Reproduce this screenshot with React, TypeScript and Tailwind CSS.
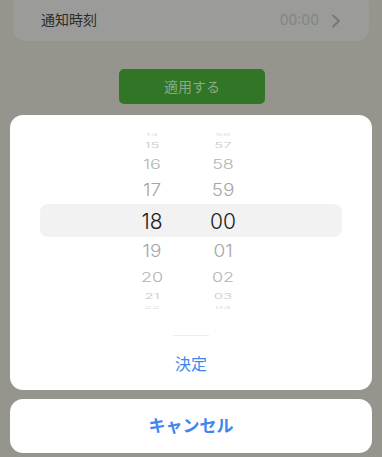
import React from "react"

const font = { fontFamily: '"Inter", "Noto Sans CJK JP", sans-serif' }

type Row = { h: string; m: string; height: string; size: string; color: string; scale: string }

const above: Row[] = [
  { h: "14", m: "56", height: "h-[8px]", size: "text-[13px]", color: "text-[#d4d8dc]", scale: "scale-y-[0.25]" },
  { h: "15", m: "57", height: "h-[14px]", size: "text-[15px]", color: "text-[#c4c8cc]", scale: "scale-y-50" },
  { h: "16", m: "58", height: "h-[24px]", size: "text-[18px]", color: "text-[#b2b2b2]", scale: "scale-y-75" },
  { h: "17", m: "59", height: "h-[28px]", size: "text-[19px]", color: "text-[#a6a6a6]", scale: "scale-y-90" },
]

const below: Row[] = [
  { h: "19", m: "01", height: "h-[28px]", size: "text-[19px]", color: "text-[#a6a6a6]", scale: "scale-y-90" },
  { h: "20", m: "02", height: "h-[24px]", size: "text-[18px]", color: "text-[#b2b2b2]", scale: "scale-y-75" },
  { h: "21", m: "03", height: "h-[14px]", size: "text-[15px]", color: "text-[#c4c8cc]", scale: "scale-y-50" },
  { h: "22", m: "04", height: "h-[8px]", size: "text-[13px]", color: "text-[#d4d8dc]", scale: "scale-y-[0.25]" },
]

function WheelRow({ row }: { row: Row }) {
  return (
    <div className={`flex items-center overflow-hidden pl-[112px] ${row.height}`}>
      <div className={`w-[60px] text-center font-light leading-none ${row.size} ${row.color} ${row.scale}`}>{row.h}</div>
      <div className={`ml-[11px] w-[60px] text-center font-light leading-none ${row.size} ${row.color} ${row.scale}`}>{row.m}</div>
    </div>
  )
}

export default function App() {
  return (
    <div className="h-[457px] w-[382px] overflow-hidden bg-[#95958e]" style={font}>
      {/* dimmed settings page */}
      <div className="mx-[13px] -mt-[10px] flex h-[51px] items-end rounded-xl bg-[#9b9b99] pb-[11px] pl-[28px] pr-[28px]">
        <span className="text-[14px] text-[#2b2b2b]">通知時刻</span>
        <span className="ml-auto text-[14px] text-[#7f887e]">00:00</span>
        <svg className="ml-[12px] mb-[2px]" width="10" height="14" viewBox="0 0 10 14" fill="none">
          <path d="M2 1.5 L8 7 L2 12.5" stroke="#6f7d6d" strokeWidth="2" strokeLinecap="round" strokeLinejoin="round" />
        </svg>
      </div>

      <div className="mt-[28px] flex justify-center">
        <div className="ml-[2px] flex h-[35px] w-[146px] items-center justify-center rounded-[5px] bg-[#317627] text-[14px] text-[#8ea98a]">
          適用する
        </div>
      </div>

      {/* action sheet */}
      <div className="mx-[10px] mt-[11px] h-[275px] rounded-[13px] bg-white">
        <div className="pt-[15px]">
          {above.map((r) => (
            <WheelRow key={r.h} row={r} />
          ))}
          <div className="mx-[30px] flex h-[33px] items-center rounded-[8px] bg-[#f2f2f2] pl-[82px] pt-[2px]">
            <div className="w-[60px] text-center text-[21px] font-light leading-none text-[#1c1c1c]">18</div>
            <div className="ml-[11px] w-[60px] text-center text-[21px] font-light leading-none text-[#1c1c1c]">00</div>
          </div>
          {below.map((r) => (
            <WheelRow key={r.h} row={r} />
          ))}
        </div>
        <div className="mx-auto mt-[24px] h-px w-[36px] bg-[#ececec]" />
        <div className="flex h-[55px] items-center justify-center text-[16px] text-[#3f87ef]">決定</div>
      </div>

      <div className="mx-[10px] mt-[9px] flex h-[54px] items-center justify-center rounded-[13px] bg-white pt-[2px] text-[17px] font-bold text-[#3f87ef]">
        キャンセル
      </div>
    </div>
  )
}
